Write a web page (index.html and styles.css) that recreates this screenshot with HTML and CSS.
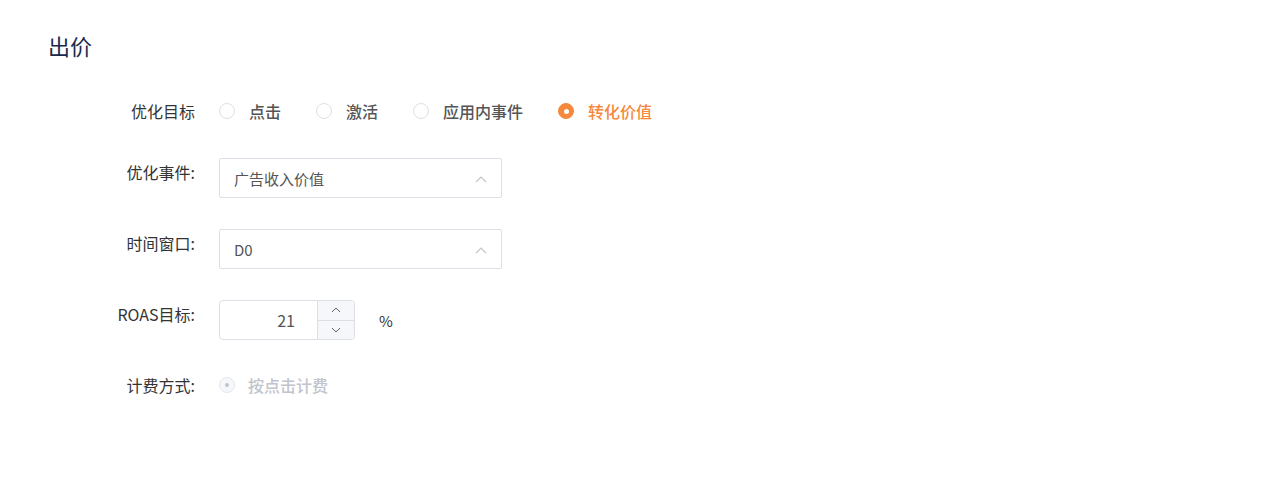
FILE: index.html
```html
<!DOCTYPE html>
<html lang="zh-CN">
<head>
<meta charset="utf-8">
<link rel="stylesheet" href="styles.css">
</head>
<body>
<div class="page">
  <h2 class="title">出价</h2>
  <div class="form">
    <div class="item item-first">
      <div class="label">优化目标</div>
      <div class="content radios">
        <label class="radio"><span class="circle"></span><span class="rtext">点击</span></label>
        <label class="radio"><span class="circle"></span><span class="rtext">激活</span></label>
        <label class="radio"><span class="circle"></span><span class="rtext">应用内事件</span></label>
        <label class="radio checked"><span class="circle"></span><span class="rtext">转化价值</span></label>
      </div>
    </div>
    <div class="item">
      <div class="label">优化事件:</div>
      <div class="content">
        <div class="select">
          <span class="sel-text">广告收入价值</span>
          <svg class="chev" width="12" height="8" viewBox="0 0 12 8"><path d="M1 7 L6 2 L11 7" fill="none" stroke="#c0c4cc" stroke-width="1.2"/></svg>
        </div>
      </div>
    </div>
    <div class="item">
      <div class="label">时间窗口:</div>
      <div class="content">
        <div class="select">
          <span class="sel-text">D0</span>
          <svg class="chev" width="12" height="8" viewBox="0 0 12 8"><path d="M1 7 L6 2 L11 7" fill="none" stroke="#c0c4cc" stroke-width="1.2"/></svg>
        </div>
      </div>
    </div>
    <div class="item">
      <div class="label">ROAS目标:</div>
      <div class="content number-row">
        <div class="number">
          <span class="num-val">21</span>
          <div class="spin">
            <div class="spin-btn up"><svg width="10" height="6" viewBox="0 0 10 6"><path d="M1 5 L5 1 L9 5" fill="none" stroke="#606266" stroke-width="1"/></svg></div>
            <div class="spin-btn"><svg width="10" height="6" viewBox="0 0 10 6"><path d="M1 1 L5 5 L9 1" fill="none" stroke="#606266" stroke-width="1"/></svg></div>
          </div>
        </div>
        <span class="unit">%</span>
      </div>
    </div>
    <div class="item">
      <div class="label">计费方式:</div>
      <div class="content radios">
        <label class="radio disabled"><span class="circle"></span><span class="rtext">按点击计费</span></label>
      </div>
    </div>
  </div>
</div>
</body>
</html>
```

FILE: styles.css
```css
* { box-sizing: border-box; }
html, body { margin: 0; padding: 0; background: #fff; }
body {
  font-family: "PingFang SC", "Noto Sans CJK SC", "Liberation Sans", sans-serif;
  color: #333;
}
.page { padding: 28px 0 0 48px; }
.title {
  margin: 0;
  font-size: 22px;
  font-weight: 400;
  line-height: 34px;
  color: #1b2a4b;
}
.form { margin-top: 35px; }
.item {
  display: flex;
  align-items: flex-start;
  margin-bottom: 31px;
}
.item-first { margin-bottom: 33px; }
.label {
  width: 171px;
  padding-right: 24px;
  text-align: right;
  font-size: 16px;
  line-height: 28px;
  color: #333;
  flex-shrink: 0;
}
.content { display: flex; align-items: center; }
.radios { height: 28px; }
.radio {
  display: flex;
  align-items: center;
  margin-right: 35px;
  cursor: pointer;
}
.circle {
  width: 16px;
  height: 16px;
  border: 1px solid #dcdfe6;
  border-radius: 50%;
  background: #fff;
  position: relative;
  flex-shrink: 0;
}
.rtext {
  padding-left: 14px;
  font-size: 16px;
  font-weight: 500;
  color: #555;
  line-height: 28px;
}
.radio.checked .circle {
  background: #f5883a;
  border-color: #f5883a;
}
.radio.checked .circle::after,
.radio.disabled .circle::after {
  content: "";
  position: absolute;
  left: 50%;
  top: 50%;
  width: 5px;
  height: 5px;
  margin: -2.5px 0 0 -2.5px;
  border-radius: 50%;
  background: #fff;
}
.radio.checked .rtext { color: #f5883a; }
.radio.disabled .circle { background: #f5f7fa; border-color: #e4e7ed; }
.radio.disabled .circle::after { background: #c0c4cc; width: 4px; height: 4px; margin: -2px 0 0 -2px; }
.radio.disabled .rtext { color: #c0c4cc; padding-left: 13px; }
.select {
  width: 283px;
  height: 40px;
  border: 1px solid #dcdfe6;
  border-radius: 2px;
  display: flex;
  align-items: center;
  justify-content: space-between;
  padding: 0 14px 0 14px;
}
.sel-text { font-size: 15px; color: #555; }
.chev { margin-top: 1px; }
.number-row { height: 40px; }
.number {
  width: 136px;
  height: 40px;
  border: 1px solid #dcdfe6;
  border-radius: 4px;
  display: flex;
  overflow: hidden;
}
.num-val {
  flex: 1;
  text-align: right;
  padding-right: 22px;
  font-size: 16px;
  color: #555;
  line-height: 38px;
}
.spin {
  width: 37px;
  border-left: 1px solid #dcdfe6;
  display: flex;
  flex-direction: column;
}
.spin-btn {
  flex: 1;
  background: #f5f7fa;
  display: flex;
  align-items: center;
  justify-content: center;
}
.spin-btn.up { border-bottom: 1px solid #dcdfe6; }
.unit { margin-left: 24px; font-size: 15px; color: #333; }
```
